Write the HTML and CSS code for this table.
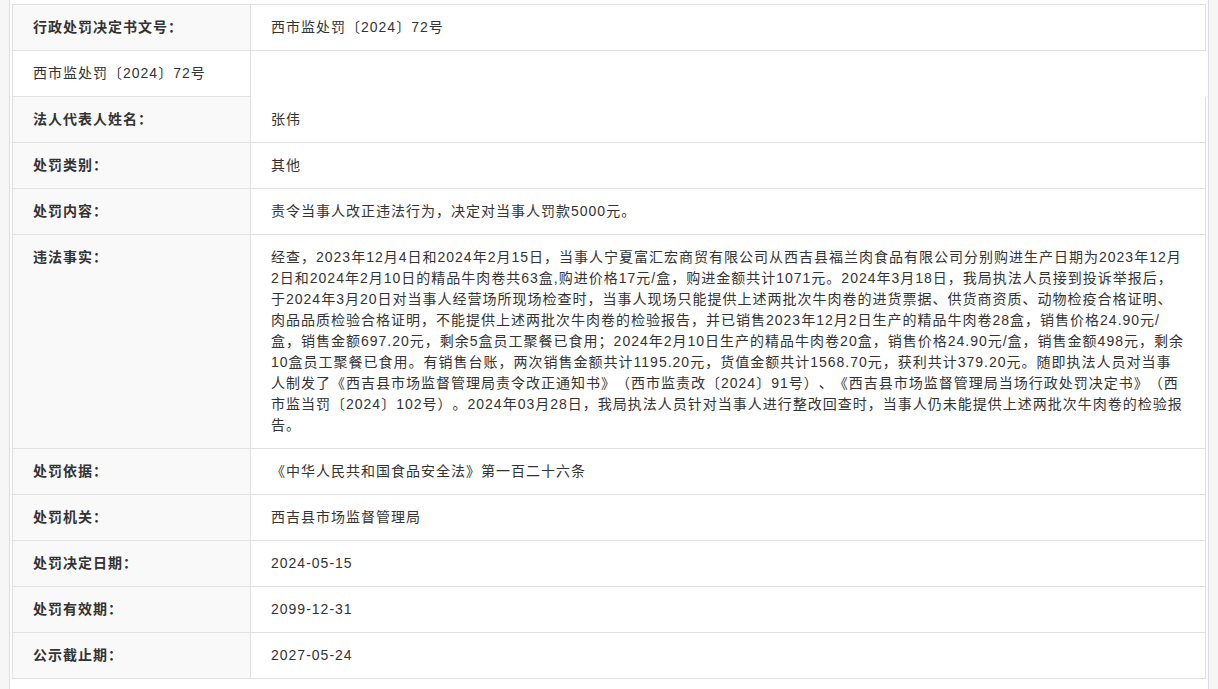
FILE: index.html
```html
<!DOCTYPE html>
<html lang="zh-CN">
<head>
  <meta charset="UTF-8" />
  <meta name="viewport" content="width=device-width, initial-scale=1.0"/>
  <title>行政处罚信息</title>
  <link rel="stylesheet" href="styles.css">
</head>
<body>
  <main class="page">
    <table class="info">
      <tr>
        <td class="label">行政处罚决定书文号：</td>
        <td class="value">西市监处罚〔2024〕72号</td>
      </tr>
      <tr>
        <td class="plain">西市监处罚〔2024〕72号</td>
      </tr>
      <tr>
        <td class="label">法人代表人姓名：</td>
        <td class="value">张伟</td>
      </tr>
      <tr>
        <td class="label">处罚类别：</td>
        <td class="value">其他</td>
      </tr>
      <tr>
        <td class="label">处罚内容：</td>
        <td class="value">责令当事人改正违法行为，决定对当事人罚款5000元。</td>
      </tr>
      <tr>
        <td class="label">违法事实：</td>
        <td class="value">经查，2023年12月4日和2024年2月15日，当事人宁夏富汇宏商贸有限公司从西吉县福兰肉食品有限公司分别购进生产日期为2023年12月2日和2024年2月10日的精品牛肉卷共63盒,购进价格17元/盒，购进金额共计1071元。2024年3月18日，我局执法人员接到投诉举报后，于2024年3月20日对当事人经营场所现场检查时，当事人现场只能提供上述两批次牛肉卷的进货票据、供货商资质、动物检疫合格证明、肉品品质检验合格证明，不能提供上述两批次牛肉卷的检验报告，并已销售2023年12月2日生产的精品牛肉卷28盒，销售价格24.90元/盒，销售金额697.20元，剩余5盒员工聚餐已食用；2024年2月10日生产的精品牛肉卷20盒，销售价格24.90元/盒，销售金额498元，剩余10盒员工聚餐已食用。有销售台账，两次销售金额共计1195.20元，货值金额共计1568.70元，获利共计379.20元。随即执法人员对当事人制发了《西吉县市场监督管理局责令改正通知书》（西市监责改〔2024〕91号）、《西吉县市场监督管理局当场行政处罚决定书》（西市监当罚〔2024〕102号）。2024年03月28日，我局执法人员针对当事人进行整改回查时，当事人仍未能提供上述两批次牛肉卷的检验报告。</td>
      </tr>
      <tr>
        <td class="label">处罚依据：</td>
        <td class="value">《中华人民共和国食品安全法》第一百二十六条</td>
      </tr>
      <tr>
        <td class="label">处罚机关：</td>
        <td class="value">西吉县市场监督管理局</td>
      </tr>
      <tr>
        <td class="label">处罚决定日期：</td>
        <td class="value">2024-05-15</td>
      </tr>
      <tr>
        <td class="label">处罚有效期：</td>
        <td class="value">2099-12-31</td>
      </tr>
      <tr>
        <td class="label">公示截止期：</td>
        <td class="value">2027-05-24</td>
      </tr>
    </table>
  </main>
</body>
</html>
```

FILE: styles.css
```css
html, body {
  margin: 0;
  height: 100%;
}

body {
  background-color: #f6f6f7;
  font-family: "Liberation Sans", "Noto Sans CJK SC", sans-serif;
  font-size: 14px;
  color: #333;
  overflow: hidden;
}

.page {
  box-sizing: border-box;
  width: 1200px;
  min-height: 100%;
  margin-left: 9px;
  padding: 4px 2px 0;
  background: white;
  border-left: 1px solid #dcdce4;
  border-right: 1px solid #dcdce4;
}

.info {
  width: 100%;
  table-layout: fixed;
  border-collapse: separate;
  border-spacing: 0;
}

.info td {
  padding: 12px 20px;
  line-height: 21px;
  letter-spacing: 1px;
  text-spacing-trim: space-all;
  vertical-align: top;
  border-right: 1px solid #e1e1e1;
  border-bottom: 1px solid #e1e1e1;
}

.info tr:first-child td {
  border-top: 1px solid #e1e1e1;
}

.info .label,
.info .plain {
  box-sizing: border-box;
  width: 239px;
  border-left: 1px solid #e1e1e1;
}

.label {
  background-color: #f9f9f9;
  font-weight: bold;
}

.plain {
  background-color: white;
  white-space: nowrap;
}

.value {
  word-break: break-all;
}
```
